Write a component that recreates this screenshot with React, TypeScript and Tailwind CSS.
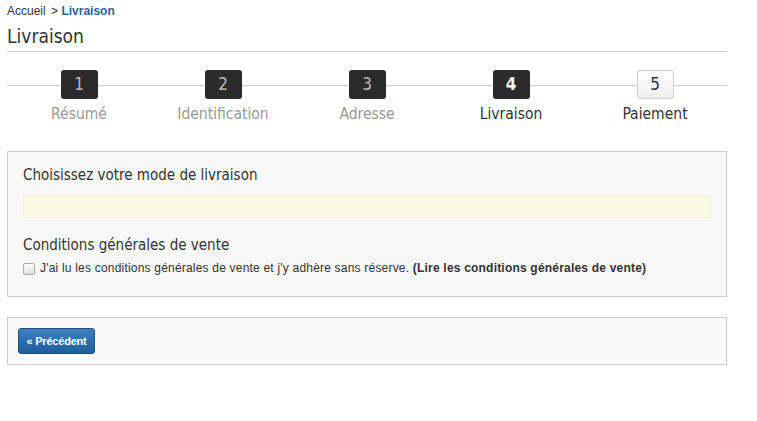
import { FunctionComponent } from "react";

const condensed = { fontFamily: '"DejaVu Sans Condensed", "DejaVu Sans", sans-serif' };

type Step = { num: number; label: string; state: "done" | "current" | "todo" };

const steps: Step[] = [
  { num: 1, label: "Résumé", state: "done" },
  { num: 2, label: "Identification", state: "done" },
  { num: 3, label: "Adresse", state: "done" },
  { num: 4, label: "Livraison", state: "current" },
  { num: 5, label: "Paiement", state: "todo" },
];

const Stepper: FunctionComponent = (): JSX.Element => {
  return (
    <div className="relative w-[720px] mt-[18px]">
      <div className="absolute left-0 right-0 top-[15px] h-px bg-[#cccccc]" />
      <div className="relative grid grid-cols-5">
        {steps.map((step) => (
          <div key={step.num} className="flex flex-col items-center">
            <div
              className={`w-[37px] h-[29px] rounded-[3px] flex items-center justify-center text-[17px] ${
                step.state === "todo"
                  ? "bg-gradient-to-b from-white to-[#eeeeee] border border-[#cccccc] text-[#333333]"
                  : step.state === "current"
                  ? "bg-[#2b2b2b] text-white font-bold"
                  : "bg-[#2b2b2b] text-[#bbbbbb]"
              }`}
              style={condensed}
            >
              {step.num}
            </div>
            <div
              className={`mt-[5px] text-[15.5px] leading-[20px] ${
                step.state === "done" ? "text-[#999999]" : "text-[#333333]"
              }`}
              style={condensed}
            >
              {step.label}
            </div>
          </div>
        ))}
      </div>
    </div>
  );
};

const App: FunctionComponent = (): JSX.Element => {
  return (
    <div className="w-[757px] h-[421px] bg-white px-[7px] font-['Liberation_Sans',Arial,sans-serif] text-[#333333]">
      <div className="pt-[4px] text-[12px] leading-[14px]">
        Accueil <span className="ml-[2px]">&gt;</span>{" "}
        <span className="font-bold text-[#2a6496]">Livraison</span>
      </div>
      <h1
        className="mt-[6px] text-[19px] leading-[24px] text-[#333333] pb-[3px] border-b border-[#cccccc] w-[720px]"
        style={condensed}
      >
        Livraison
      </h1>

      <Stepper />

      <div className="mt-[27px] w-[720px] h-[146px] border border-[#cccccc] bg-[#f8f8f8] px-[15px] pt-[12px]">
        <div className="text-[15px] leading-[22px] text-[#333333]" style={condensed}>
          Choisissez votre mode de livraison
        </div>
        <div className="mt-[9px] h-[23px] bg-[#fcf8e3] border border-[#faf0d2]" />
        <div className="mt-[16px] text-[15px] leading-[22px] text-[#333333]" style={condensed}>
          Conditions générales de vente
        </div>
        <label className="mt-[5px] flex items-center text-[12px] leading-[15px] tracking-[0.2px] text-[#333333]">
          <span className="w-[12px] h-[12px] rounded-[2px] border border-[#aaaaaa] bg-gradient-to-b from-[#fdfdfd] to-[#e2e2e2] mr-[5px]" />
          <span>
            J'ai lu les conditions générales de vente et j'y adhère sans réserve.{" "}
            <span className="font-bold">(Lire les conditions générales de vente)</span>
          </span>
        </label>
      </div>

      <div className="mt-[20px] w-[720px] h-[48px] border border-[#cccccc] bg-[#fafafa] px-[10px] pt-[10px]">
        <button className="w-[77px] h-[26px] rounded-[3px] border border-[#1f4f7e] bg-gradient-to-b from-[#3a81c4] to-[#1f5e99] text-white text-[11px] font-bold tracking-[-0.2px]">
          « Précédent
        </button>
      </div>
    </div>
  );
};

export default App;
